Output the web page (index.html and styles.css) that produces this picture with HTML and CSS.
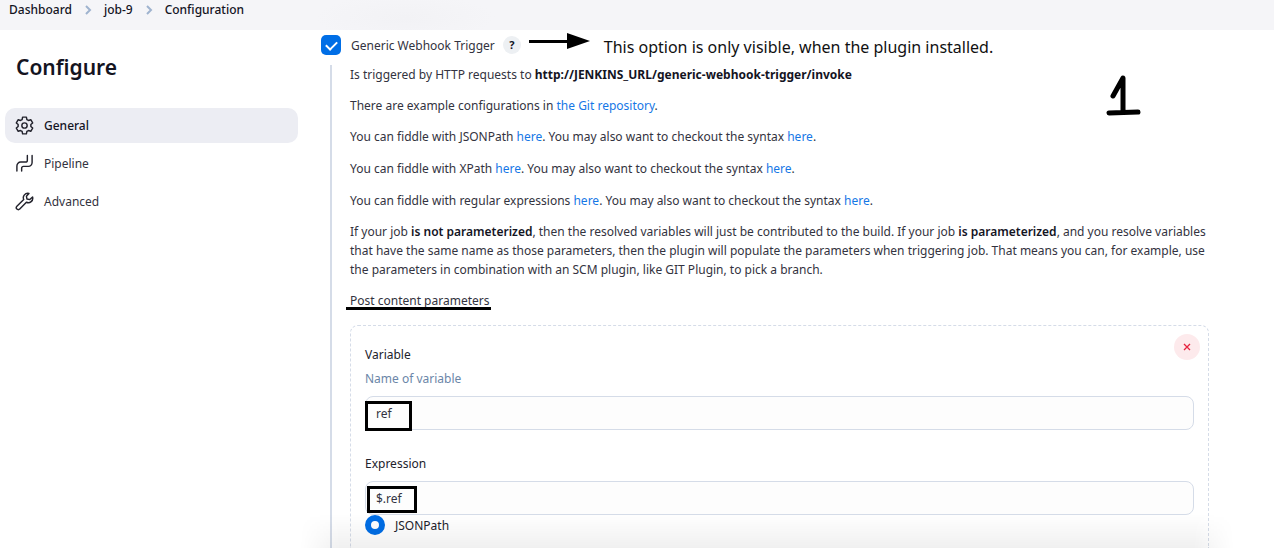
FILE: index.html
```html
<!DOCTYPE html>
<html lang="en">
<head>
<meta charset="utf-8">
<meta name="viewport" content="width=device-width, initial-scale=1">
<title>job-9 Configuration</title>
<link rel="stylesheet" href="styles.css">
</head>
<body>
<header class="topbar">
  <nav class="crumbs" aria-label="Breadcrumb">
    <a href="#">Dashboard</a>
    <svg class="chevron" viewBox="0 0 8 12"><path d="M2 2l4 4-4 4"/></svg>
    <a href="#">job-9</a>
    <svg class="chevron" viewBox="0 0 8 12"><path d="M2 2l4 4-4 4"/></svg>
    <a href="#">Configuration</a>
  </nav>
</header>
<div class="page">
  <aside class="sidebar">
    <h1 class="title">Configure</h1>
    <nav class="tasks" aria-label="Sections">
      <a class="task task-active" href="#">
        <svg class="icon" viewBox="0 0 20 20"><path d="M8 1.200h4l.5 2.500 1.700 1 2.400-.8 2 3.400-1.900 1.700v2l1.900 1.700-2 3.400-2.400-.8-1.700 1-.5 2.500H8l-.5-2.500-1.700-1-2.400.8-2-3.400L3.300 11V9L1.400 7.300l2-3.400 2.400.8 1.700-1z"/><circle cx="10" cy="10" r="2.800"/></svg>
        General
      </a>
      <a class="task" href="#">
        <svg class="icon" viewBox="0 0 20 20"><path d="M2 18V12.500a4 4 0 0 1 4-4h5a2 2 0 0 0 2-2V1.500M7 18V15a2 2 0 0 1 2-2h5a4 4 0 0 0 4-4V1.500"/></svg>
        Pipeline
      </a>
      <a class="task" href="#">
        <svg class="icon" viewBox="0 0 20 20"><path d="M18.500 5.300a4.700 4.700 0 0 1-6.500 5.500L5 18a2.100 2.100 0 0 1-3-3L9.200 8a4.700 4.700 0 0 1 5.500-6.500L12 4.400l.6 3 3 .6z"/></svg>
        Advanced
      </a>
    </nav>
  </aside>
  <main class="content">
    <div class="trigger">
      <input class="check" type="checkbox" id="webhook" checked>
      <label for="webhook">Generic Webhook Trigger</label>
      <button class="help" type="button" aria-label="Help">?</button>
      <svg class="arrow" viewBox="0 0 61 16"><path d="M0 7h38V0l23 8-23 8V10H0z"/></svg>
      <span class="note">This option is only visible, when the plugin installed.</span>
    </div>
    <svg class="step" viewBox="0 0 36 42" role="img" aria-label="Step 1"><path d="M8 22L18 4V37M4 39L33 38"/></svg>
    <section class="details">
      <p>Is triggered by HTTP requests to <b class="url">http://JENKINS_URL/generic-webhook-trigger/invoke</b></p>
      <p>There are example configurations in <a href="#">the Git repository</a>.</p>
      <p class="tip">You can fiddle with JSONPath <a href="#">here</a>. You may also want to checkout the syntax <a href="#">here</a>.</p>
      <p class="tip">You can fiddle with XPath <a href="#">here</a>. You may also want to checkout the syntax <a href="#">here</a>.</p>
      <p>You can fiddle with regular expressions <a href="#">here</a>. You may also want to checkout the syntax <a href="#">here</a>.</p>
      <p>If your job <b>is not parameterized</b>, then the resolved variables will just be contributed to the build. If your job <b>is parameterized</b>, and you resolve variables that have the same name as those parameters, then the plugin will populate the parameters when triggering job. That means you can, for example, use the parameters in combination with an SCM plugin, like GIT Plugin, to pick a branch.</p>
      <h2 class="group"><span class="marked">Post content parameters</span></h2>
      <div class="card">
        <button class="remove" type="button" aria-label="Remove"><svg viewBox="0 0 10 10"><path d="M2 2l6 6M8 2l-6 6"/></svg></button>
        <div class="field">
          <label for="variable">Variable</label>
          <div class="hint">Name of variable</div>
          <div class="box"><input class="text" type="text" id="variable" value="ref"><span class="frame"></span></div>
        </div>
        <div class="field">
          <label for="expression">Expression</label>
          <div class="box"><input class="text" type="text" id="expression" value="$.ref"><span class="frame frame-wide"></span></div>
          <label class="option"><input class="radio" type="radio" name="kind" checked>JSONPath</label>
        </div>
      </div>
    </section>
  </main>
</div>
<div class="footer-shade"></div>
</body>
</html>
```
FILE: styles.css
```css
* { box-sizing: border-box; }

body {
  margin: 0;
  height: 100vh;
  padding-bottom: 2px;
  overflow: hidden;
  position: relative;
  display: flex;
  flex-direction: column;
  background: #fff;
  color: #333340;
  font: 12px/19px "Noto Sans", sans-serif;
}

button, input { font: inherit; color: inherit; }
a { color: #1577e6; text-decoration: none; }
b { color: #14141f; font-weight: 600; }
.url { font-weight: 700; }

.topbar {
  flex: none;
  height: 30px;
  padding-left: 9px;
  background: radial-gradient(ellipse 90px 24px at 405px 18px, #f2f2f5, #f5f5f8);
}
.crumbs { display: flex; align-items: center; gap: 12px; }
.crumbs a { color: #14141f; font-weight: 500; }
.chevron { width: 8px; height: 12px; fill: none; stroke: #9fb3cf; stroke-width: 2; }

.page {
  flex: 1;
  min-height: 0;
  display: grid;
  grid-template: minmax(0, 1fr) / 298px minmax(0, 1fr);
  column-gap: 23px;
}

.sidebar { padding: 22px 0 0 5px; }
.title { margin: 0 0 25px 11px; color: #14141f; font-size: 21px; font-weight: 600; line-height: 31px; }
.tasks { display: grid; gap: 3px; }
.task {
  display: flex;
  align-items: center;
  gap: 10px;
  height: 35px;
  padding-left: 10px;
  border-radius: 10px;
  color: #333340;
}
.task-active { background: #ecedf3; color: #14141f; font-weight: 500; }
.icon { width: 19px; height: 19px; fill: none; stroke: #22222c; stroke-width: 1.5; stroke-linejoin: round; stroke-linecap: round; }

.content {
  position: relative;
  display: flex;
  flex-direction: column;
  padding: 5px 65px 0 0;
}
.trigger { display: flex; align-items: center; height: 20px; }
.check {
  appearance: none;
  width: 20px;
  height: 20px;
  margin: 0 10px 0 0;
  border-radius: 5px;
  background: #006ee6;
  display: grid;
  place-items: center;
}
.check::before {
  content: "";
  width: 9px;
  height: 5px;
  margin-bottom: 2px;
  border: solid #fff;
  border-width: 0 0 2px 2px;
  transform: rotate(-45deg);
}
.help {
  width: 18px;
  height: 18px;
  margin: 0 8px;
  padding: 0;
  border: 0;
  border-radius: 50%;
  background: #edf0f3;
  color: #14141f;
  font-size: 11px;
  font-weight: 700;
  line-height: 18px;
}
.arrow { width: 61px; height: 16px; margin-bottom: 8px; }
.note { margin: 4px 0 0 14px; color: #111; font-size: 16px; white-space: nowrap; }
.step {
  position: absolute;
  top: 44px;
  right: 133px;
  width: 36px;
  height: 42px;
  fill: none;
  stroke: #000;
  stroke-width: 5;
  stroke-linecap: round;
  stroke-linejoin: round;
}

.details {
  flex: 1;
  min-height: 0;
  display: flex;
  flex-direction: column;
  margin: 10px 0 0 9px;
  padding-left: 18px;
  border-left: 2px solid #d5dce8;
}
.details p { margin: 0 0 12px; }
.details .tip { margin-bottom: 13px; }
.group { margin: 0 0 15px; font-size: 12px; font-weight: 400; }
.marked { position: relative; }
.marked::after {
  content: "";
  position: absolute;
  left: -4px;
  right: -2px;
  bottom: -1px;
  height: 3px;
  background: #000;
}

.card {
  flex: 1;
  position: relative;
  padding: 19px 14px 0;
  border: 1px dashed #d5dce8;
  border-bottom: 0;
  border-radius: 8px 8px 0 0;
}
.remove {
  position: absolute;
  top: 8px;
  right: 8px;
  width: 26px;
  height: 26px;
  padding: 8px;
  border: 0;
  border-radius: 50%;
  background: #fdeaec;
}
.remove svg { display: block; width: 10px; height: 10px; fill: none; stroke: #e6233f; stroke-width: 1.3; }

.field + .field { margin-top: 24px; }
.field label { display: block; color: #22222c; }
.hint { margin-top: 5px; color: #6b86a8; }
.box { position: relative; margin-top: 8px; }
.text {
  display: block;
  width: 100%;
  height: 34px;
  padding: 0 10px;
  border: 1px solid #d5dce8;
  border-radius: 8px;
  background: #fdfdfd;
}
.frame {
  position: absolute;
  top: 5px;
  left: 0;
  width: 47px;
  height: 30px;
  border: 3px solid #000;
  pointer-events: none;
}
.frame-wide { left: 2px; width: 50px; height: 27px; }
.field .option { display: flex; align-items: center; gap: 10px; }
.radio {
  appearance: none;
  width: 20px;
  height: 20px;
  margin: 0;
  border: 6px solid #006ee6;
  border-radius: 50%;
  background: #fff;
}

.footer-shade {
  position: absolute;
  left: 300px;
  right: 40px;
  bottom: 2px;
  height: 34px;
  background: linear-gradient(transparent, rgba(0, 0, 0, 0.06));
  mask-image: linear-gradient(90deg, transparent, #000 40px, #000 calc(100% - 40px), transparent);
  pointer-events: none;
}
```
